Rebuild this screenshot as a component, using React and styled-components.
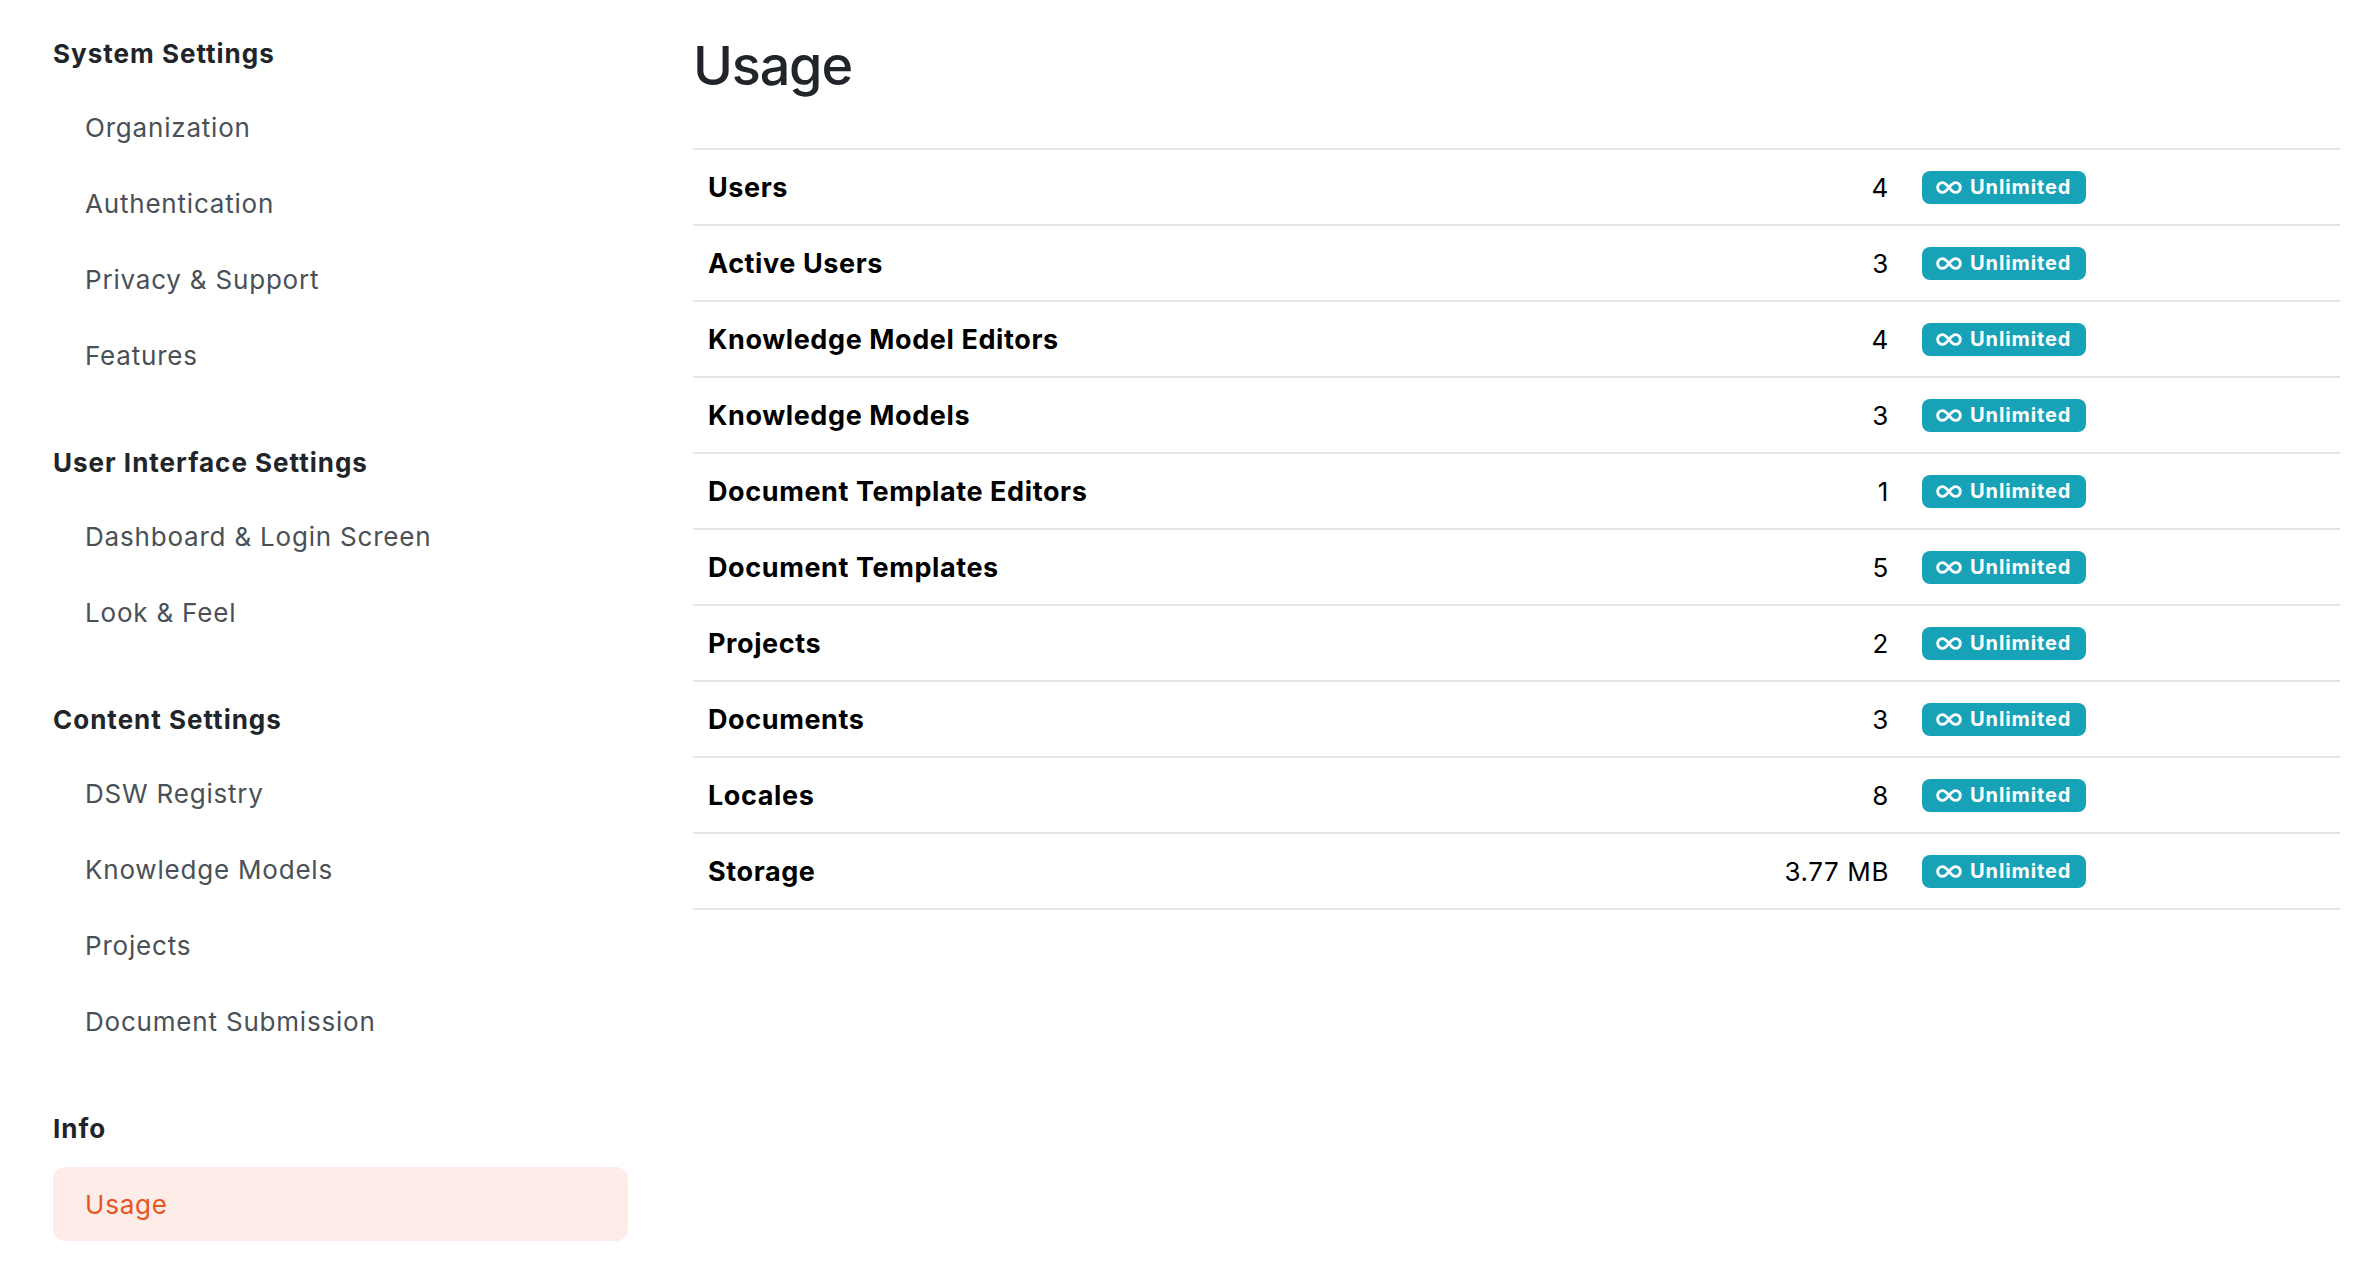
import React from "react";
import styled, { createGlobalStyle } from "styled-components";

const GlobalStyle = createGlobalStyle`
  body {
    margin: 0;
    background: #ffffff;
    font-family: Inter, "Liberation Sans", sans-serif;
    -webkit-font-smoothing: antialiased;
  }
`;

const Page = styled.div`
  display: flex;
  gap: 65px;
  padding: 0 32px 0 53px;
`;

const Sidebar = styled.nav`
  width: 575px;
  flex-shrink: 0;
  padding-top: 38px;
  display: flex;
  flex-direction: column;
  gap: 56px;
`;

const Section = styled.div`
  display: flex;
  flex-direction: column;
`;

const SectionTitle = styled.div`
  font-size: 26px;
  line-height: 31px;
  font-weight: 700;
  letter-spacing: 1px;
  color: #212529;
  margin-bottom: 22px;
`;

const NavList = styled.div`
  display: flex;
  flex-direction: column;
  gap: 4px;
`;

const NavItem = styled.a`
  display: flex;
  align-items: center;
  height: ${(p) => (p.$active ? "74px" : "72px")};
  margin-top: ${(p) => (p.$active ? "1px" : "0")};
  padding-left: 32px;
  border-radius: 12px;
  font-size: 26px;
  letter-spacing: 0.8px;
  font-weight: 400;
  text-decoration: none;
  cursor: pointer;
  color: ${(p) => (p.$active ? "#e8551f" : "#495057")};
  background: ${(p) => (p.$active ? "#fdece7" : "transparent")};
`;

const Main = styled.main`
  flex: 1;
  padding-top: 33px;
`;

const Title = styled.h1`
  margin: 0 0 50px;
  font-size: 54px;
  line-height: 65px;
  font-weight: 500;
  letter-spacing: -1.2px;
  color: #212529;
`;

const Table = styled.div`
  border-top: 2px solid #e1e4e8;
`;

const Row = styled.div`
  display: flex;
  align-items: center;
  height: 74px;
  border-bottom: 2px solid #e1e4e8;
`;

const Label = styled.div`
  flex: 1;
  padding-left: 15px;
  font-size: 27px;
  font-weight: 700;
  letter-spacing: 0.6px;
  color: #000;
`;

const Value = styled.div`
  padding-right: 15px;
  text-align: right;
  font-size: 26px;
  letter-spacing: 0.6px;
  color: #000;
`;

const BadgeCell = styled.div`
  width: 436px;
  padding-left: 18px;
  box-sizing: border-box;
  display: flex;
  align-items: center;
`;

const Badge = styled.span`
  display: inline-flex;
  align-items: center;
  gap: 7px;
  height: 33px;
  padding: 0 15px 0 13px;
  border-radius: 8px;
  background: #18a2b8;
  color: #fff;
  font-size: 20px;
  font-weight: 700;
  letter-spacing: 0.9px;
`;

const InfinityIcon = () => (
  <svg width="28" height="15" viewBox="0 0 28 15" fill="none">
    <path
      d="M7.5 2.6a4.9 4.9 0 1 0 0 9.8c2.8 0 4.4-2.4 6.5-4.9s3.7-4.9 6.5-4.9a4.9 4.9 0 1 1 0 9.8c-2.8 0-4.4-2.4-6.5-4.9S10.3 2.6 7.5 2.6z"
      stroke="#fff"
      strokeWidth="2.8"
      strokeLinejoin="round"
    />
  </svg>
);

const sections = [
  {
    title: "System Settings",
    items: ["Organization", "Authentication", "Privacy & Support", "Features"],
  },
  {
    title: "User Interface Settings",
    items: ["Dashboard & Login Screen", "Look & Feel"],
  },
  {
    title: "Content Settings",
    items: ["DSW Registry", "Knowledge Models", "Projects", "Document Submission"],
  },
  { title: "Info", items: ["Usage"] },
];

const usage = [
  ["Users", "4"],
  ["Active Users", "3"],
  ["Knowledge Model Editors", "4"],
  ["Knowledge Models", "3"],
  ["Document Template Editors", "1"],
  ["Document Templates", "5"],
  ["Projects", "2"],
  ["Documents", "3"],
  ["Locales", "8"],
  ["Storage", "3.77 MB"],
];

export default function App() {
  return (
    <>
      <GlobalStyle />
      <Page>
        <Sidebar>
          {sections.map((s) => (
            <Section key={s.title}>
              <SectionTitle>{s.title}</SectionTitle>
              <NavList>
                {s.items.map((item) => (
                  <NavItem key={item} $active={item === "Usage"}>
                    {item}
                  </NavItem>
                ))}
              </NavList>
            </Section>
          ))}
        </Sidebar>
        <Main>
          <Title>Usage</Title>
          <Table>
            {usage.map(([label, value]) => (
              <Row key={label}>
                <Label>{label}</Label>
                <Value>{value}</Value>
                <BadgeCell>
                  <Badge>
                    <InfinityIcon />
                    Unlimited
                  </Badge>
                </BadgeCell>
              </Row>
            ))}
          </Table>
        </Main>
      </Page>
    </>
  );
}
